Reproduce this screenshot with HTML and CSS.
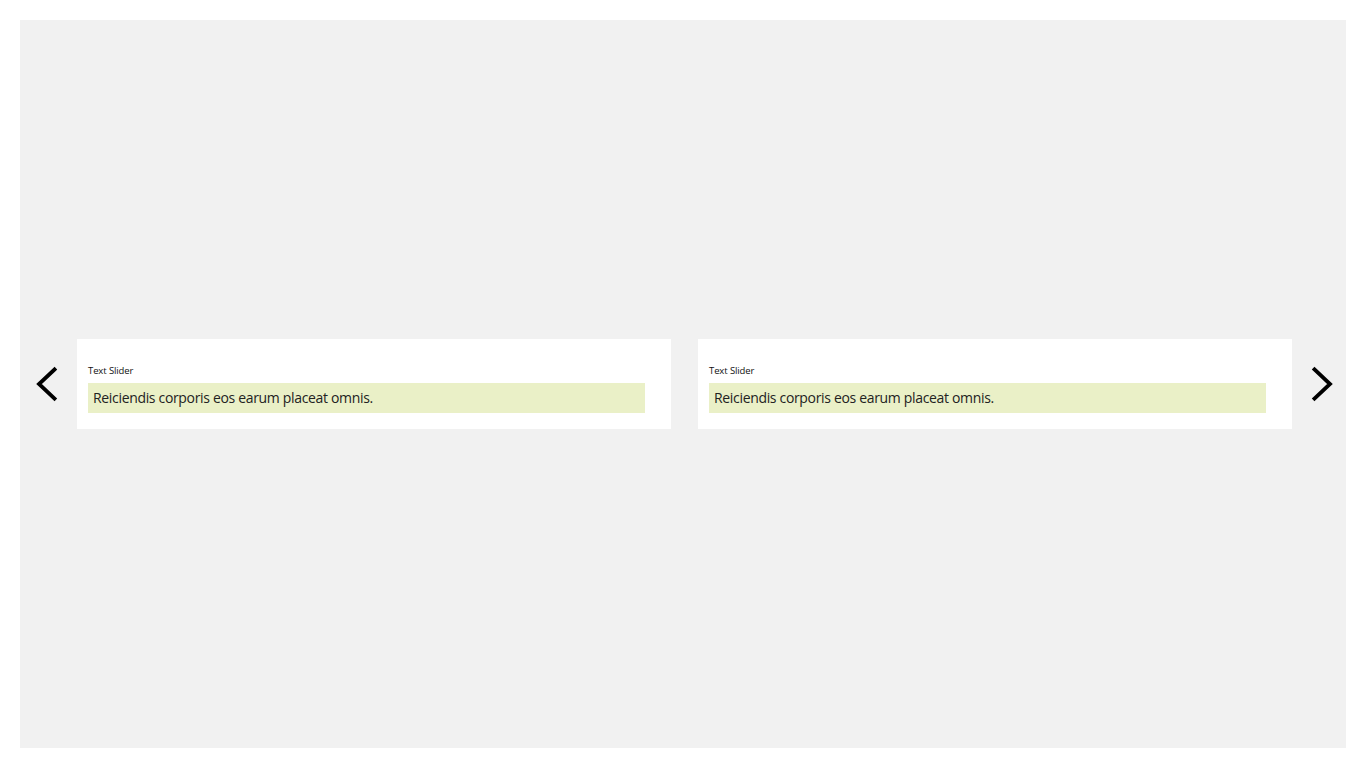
FILE: index.html
```html
<!DOCTYPE html>
<html>
<head>
<meta charset="utf-8">
<link rel="stylesheet" href="styles.css">
</head>
<body>
<div class="stage">
  <button class="nav nav-prev" aria-label="Previous">
    <svg width="24" height="36" viewBox="0 0 24 36"><polyline points="19.5,3.5 4,18 19.5,32.5" fill="none" stroke="#000" stroke-width="3.8" stroke-linecap="square"/></svg>
  </button>
  <div class="track">
    <div class="card">
      <div class="label">Text Slider</div>
      <div class="value">Reiciendis corporis eos earum placeat omnis.</div>
    </div>
    <div class="card">
      <div class="label">Text Slider</div>
      <div class="value">Reiciendis corporis eos earum placeat omnis.</div>
    </div>
  </div>
  <button class="nav nav-next" aria-label="Next">
    <svg width="24" height="36" viewBox="0 0 24 36"><polyline points="4.5,3.5 20,18 4.5,32.5" fill="none" stroke="#000" stroke-width="3.8" stroke-linecap="square"/></svg>
  </button>
</div>
</body>
</html>
```
FILE: styles.css
```css
html, body {
  margin: 0;
  padding: 0;
  background: #fff;
}
body {
  padding: 20px;
  font-family: "Open Sans", "Noto Sans", sans-serif;
  color: #222;
}
.stage {
  width: 1326px;
  height: 728px;
  background: #f1f1f1;
  display: flex;
  align-items: center;
}
.nav {
  border: 0;
  background: transparent;
  padding: 0;
  margin: 0;
  display: flex;
  align-items: center;
  cursor: pointer;
}
.nav-prev {
  width: 57px;
  justify-content: flex-start;
  padding-left: 15px;
}
.nav-next {
  width: 54px;
  justify-content: flex-start;
  padding-left: 18px;
}
.track {
  display: flex;
  gap: 27px;
}
.card {
  width: 594px;
  height: 90px;
  box-sizing: border-box;
  background: #fff;
  padding: 25px 26px 0 11px;
}
.label {
  font-size: 9.5px;
  line-height: 13px;
  color: #111;
  margin-bottom: 6px;
  letter-spacing: -0.1px;
}
.value {
  background: #eaf0c7;
  height: 30px;
  box-sizing: border-box;
  padding: 0 5px;
  font-size: 14px;
  line-height: 30px;
  letter-spacing: -0.33px;
  color: #222;
}
```
